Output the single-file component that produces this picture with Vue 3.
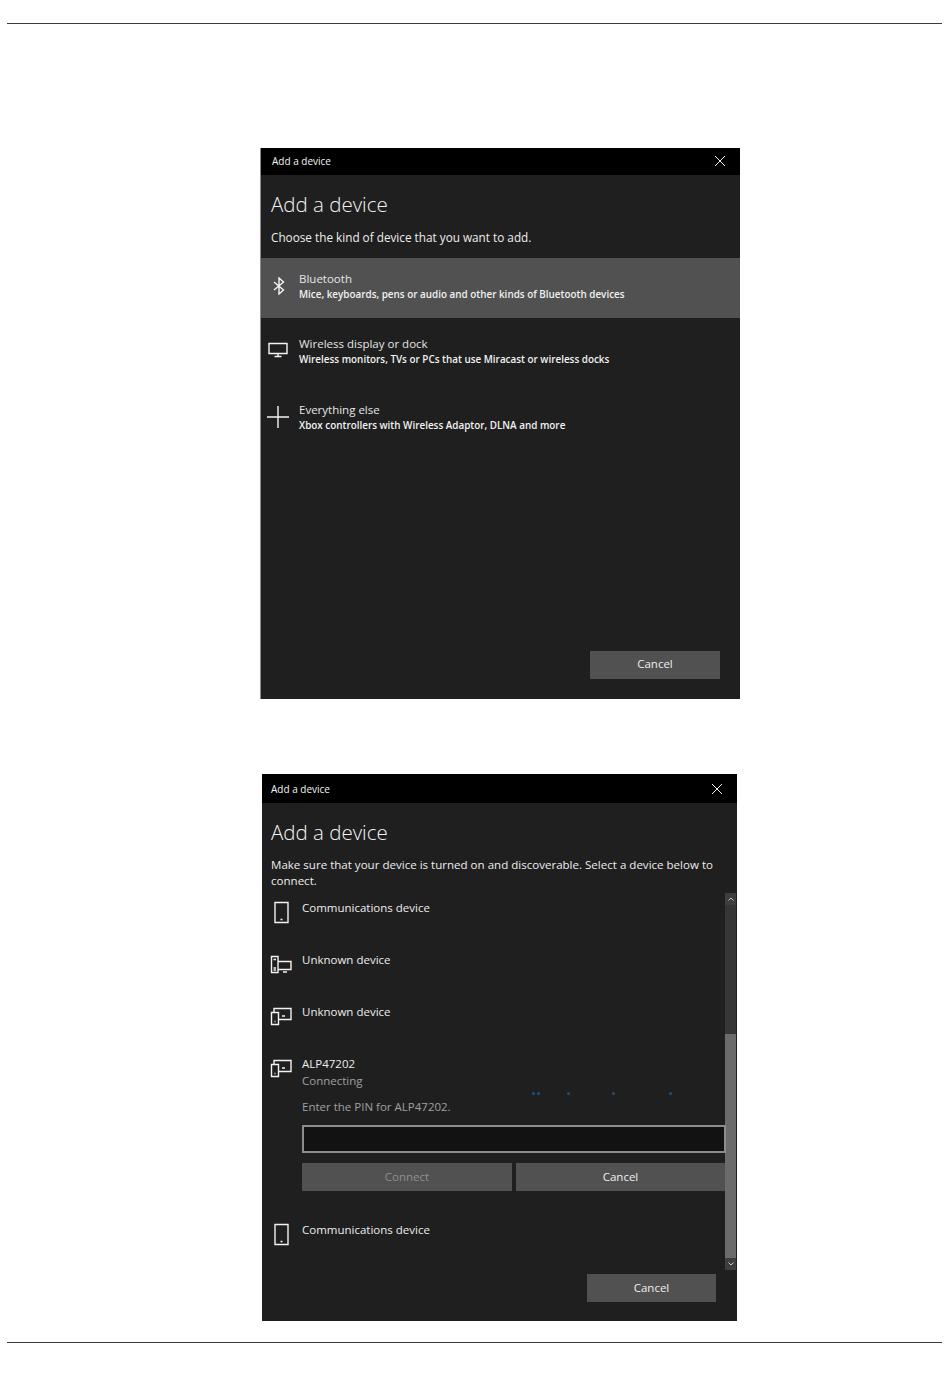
<template>
  <div class="page">
    <div class="rule top-rule"></div>

    <section class="dialog first">
      <header class="titlebar">
        <span>Add a device</span>
        <svg class="close" viewBox="0 0 10 10"><path d="M0 0L10 10M10 0L0 10" /></svg>
      </header>
      <h2>Add a device</h2>
      <p class="intro">Choose the kind of device that you want to add.</p>

      <div class="kinds">
        <div v-for="kind in kinds" :key="kind.title" class="kind" :class="{ active: kind.active }">
          <div class="kind-icon">
            <svg v-if="kind.icon === 'bluetooth'" width="12" height="18" viewBox="0 0 12 18">
              <path d="M1 5L10.5 13L6 17V1L10.5 5L1 13" />
            </svg>
            <svg v-else-if="kind.icon === 'display'" class="display-icon" width="20" height="16" viewBox="0 0 20 16">
              <path d="M1 1.5H19V11.5H1ZM10 11.5V14.5M6.5 14.5H13.5" />
            </svg>
            <svg v-else width="22" height="22" viewBox="0 0 22 22">
              <path d="M0 11H22M11 0V22" />
            </svg>
          </div>
          <div>
            <div class="kind-title">{{ kind.title }}</div>
            <div class="kind-sub">{{ kind.sub }}</div>
          </div>
        </div>
      </div>

      <div class="footer">
        <button type="button" class="btn footer-btn">Cancel</button>
      </div>
    </section>

    <section class="dialog second">
      <header class="titlebar">
        <span>Add a device</span>
        <svg class="close" viewBox="0 0 10 10"><path d="M0 0L10 10M10 0L0 10" /></svg>
      </header>
      <h2>Add a device</h2>
      <p class="intro two-line">
        Make sure that your device is turned on and discoverable. Select a device below to connect.
      </p>

      <div class="list-wrap">
        <div class="list">
          <div class="device">
            <svg class="dev-icon" width="22" height="24" viewBox="0 0 22 24">
              <path d="M5 2.5H18V22.5H5ZM10.5 19.5H12.5" />
            </svg>
            <div class="device-name">Communications device</div>
          </div>
          <div class="device">
            <svg class="dev-icon" width="22" height="24" viewBox="0 0 22 24">
              <path d="M1.5 4.5H8V20.5H1.5ZM3.5 7.5H6M3.5 16H6M3.5 18H6M8 9.5H21V17.5H8M13 20H17" />
            </svg>
            <div class="device-name">Unknown device</div>
          </div>
          <div class="device">
            <svg class="dev-icon" width="22" height="24" viewBox="0 0 22 24">
              <path d="M4 8V4.5H21V15.5H9M1.5 8.5H8.5V20.5H1.5ZM4.5 17.5H5.5M12 12H15" />
            </svg>
            <div class="device-name">Unknown device</div>
          </div>
          <div class="device open">
            <svg class="dev-icon" width="22" height="24" viewBox="0 0 22 24">
              <path d="M4 8V4.5H21V15.5H9M1.5 8.5H8.5V20.5H1.5ZM4.5 17.5H5.5M12 12H15" />
            </svg>
            <div class="device-body">
              <div class="device-name">ALP47202</div>
              <div class="status">Connecting</div>
              <div class="pin-label">Enter the PIN for ALP47202.</div>
              <div class="pin-input"></div>
              <div class="pin-actions">
                <button type="button" class="btn disabled">Connect</button>
                <button type="button" class="btn">Cancel</button>
              </div>
            </div>
            <i v-for="x in dots" :key="x" class="dot" :style="{ left: x + 'px' }"></i>
          </div>
          <div class="device">
            <svg class="dev-icon" width="22" height="24" viewBox="0 0 22 24">
              <path d="M5 2.5H18V22.5H5ZM10.5 19.5H12.5" />
            </svg>
            <div class="device-name">Communications device</div>
          </div>
        </div>

        <div class="scrollbar">
          <div class="arrow">
            <svg width="6" height="4" viewBox="0 0 6 4"><path d="M0.5 3.5L3 1L5.5 3.5" /></svg>
          </div>
          <div class="track"></div>
          <div class="thumb"></div>
          <div class="arrow">
            <svg width="6" height="4" viewBox="0 0 6 4"><path d="M0.5 0.5L3 3L5.5 0.5" /></svg>
          </div>
        </div>
      </div>

      <div class="footer">
        <button type="button" class="btn footer-btn">Cancel</button>
      </div>
    </section>

    <div class="rule bottom-rule"></div>
  </div>
</template>

<script setup>
const kinds = [
  {
    icon: 'bluetooth',
    title: 'Bluetooth',
    sub: 'Mice, keyboards, pens or audio and other kinds of Bluetooth devices',
    active: true
  },
  {
    icon: 'display',
    title: 'Wireless display or dock',
    sub: 'Wireless monitors, TVs or PCs that use Miracast or wireless docks'
  },
  {
    icon: 'plus',
    title: 'Everything else',
    sub: 'Xbox controllers with Wireless Adaptor, DLNA and more'
  }
]

const dots = [262, 267, 297, 342, 399]
</script>

<style>
html,
body {
  margin: 0;
  background: #fff;
}
</style>

<style scoped>
.page {
  height: 1387px;
  padding: 23px 8px 0 7px;
  box-sizing: border-box;
  font-family: "Open Sans", "Noto Sans", sans-serif;
  color: #f2f2f2;
  overflow: hidden;
}

.rule {
  height: 1px;
  background: #3c3c3c;
}

.dialog {
  background: #1f1f1f;
  display: flex;
  flex-direction: column;
  box-sizing: border-box;
}

.first {
  width: 480px;
  height: 551px;
  margin: 124px 0 0 253px;
  border-left: 1px solid #8a8a8a;
}

.second {
  width: 475px;
  height: 547px;
  margin: 75px 0 0 255px;
}

.titlebar {
  height: 27px;
  flex: none;
  background: #000;
  display: flex;
  align-items: center;
  justify-content: space-between;
  padding: 0 15px 1px 11px;
  box-sizing: border-box;
  font-size: 10px;
}

.second .titlebar {
  height: 29px;
  padding: 0 15px 0 9px;
}

.close {
  width: 10px;
  height: 10px;
}

.close path {
  stroke: #f0f0f0;
  stroke-width: 1;
  fill: none;
}

h2 {
  margin: 15px 0 0 10px;
  font-size: 20.5px;
  line-height: 28px;
  font-weight: 300;
  color: #f4f4f4;
}

.second h2 {
  margin: 15px 0 0 9px;
}

.intro {
  margin: 11px 0 0 10px;
  font-size: 11.75px;
  line-height: 16px;
  color: #ededed;
}

.two-line {
  margin: 11px 20px 0 9px;
  font-size: 11.55px;
}

.kinds {
  margin-top: 13px;
  flex: 1;
}

.kind {
  height: 60px;
  margin-bottom: 5.5px;
  display: flex;
  align-items: center;
  padding-bottom: 4px;
  box-sizing: border-box;
}

.kind.active {
  background: #515151;
}

.kind-icon {
  width: 38px;
  padding-right: 4px;
  box-sizing: border-box;
  display: flex;
  justify-content: center;
  flex: none;
}

.kind.active .kind-icon {
  padding-right: 2px;
}

.kind-icon path {
  fill: none;
  stroke: #f4f4f4;
  stroke-width: 1.4;
}

.display-icon {
  margin-top: -3px;
}

.kind-title {
  font-size: 11.5px;
  line-height: 15px;
  color: #e6e6e6;
}

.kind-sub {
  font-size: 9.9px;
  line-height: 16px;
  font-weight: 600;
  color: #f2f2f2;
}

.footer {
  display: flex;
  justify-content: flex-end;
  padding: 0 20px 20px 0;
}

.btn {
  border: 0;
  background: #515151;
  color: #efefef;
  font-family: inherit;
  font-size: 11.5px;
  height: 28px;
  padding: 0 0 3px;
  display: block;
}

.second .btn {
  padding-bottom: 1px;
}

.footer-btn {
  width: 130px;
}

.list-wrap {
  margin-top: 4px;
  height: 377px;
  display: flex;
  flex: none;
}

.list {
  flex: 1;
  min-width: 0;
  padding-left: 8px;
  padding-top: 6px;
  box-sizing: border-box;
}

.device {
  display: flex;
  height: 52px;
  position: relative;
}

.device.open {
  height: 166px;
}

.dev-icon {
  flex: none;
  margin-right: 10px;
  margin-top: 1px;
}

.dev-icon path {
  fill: none;
  stroke: #f2f2f2;
  stroke-width: 1.4;
}

.device-name {
  font-size: 11.5px;
  line-height: 18px;
  color: #ededed;
}

.device-body {
  flex: 1;
  min-width: 0;
}

.status {
  font-size: 11.5px;
  line-height: 16px;
  color: #a0a0a0;
}

.pin-label {
  margin-top: 10px;
  font-size: 11.5px;
  line-height: 16px;
  color: #a0a0a0;
}

.pin-input {
  position: relative;
  margin: 10px -1px 0 0;
  height: 28px;
  background: #121212;
  border: 2px solid #8c8c8c;
  box-sizing: border-box;
}

.pin-actions {
  margin-top: 10px;
  display: grid;
  grid-template-columns: 210px 1fr;
  gap: 4px;
}

.btn.disabled {
  color: #8f8f8f;
}

.dot {
  position: absolute;
  top: 37px;
  width: 3px;
  height: 3px;
  background: #1c4f80;
  border-radius: 50%;
}

.scrollbar {
  width: 11px;
  margin-right: 1px;
  flex: none;
  display: flex;
  flex-direction: column;
  background: #363636;
}

.arrow {
  height: 12px;
  flex: none;
  display: flex;
  align-items: center;
  justify-content: center;
  background: #3e3e3e;
}

.arrow path {
  fill: none;
  stroke: #c8c8c8;
  stroke-width: 1;
}

.track {
  height: 129px;
  flex: none;
}

.thumb {
  flex: 1;
  background: #6b6b6b;
}

.second .footer {
  margin-top: auto;
  padding: 0 21px 19px 0;
}

.second .footer-btn {
  width: 129px;
}

.top-rule {
  flex: none;
}

.bottom-rule {
  margin-top: 21px;
}
</style>
